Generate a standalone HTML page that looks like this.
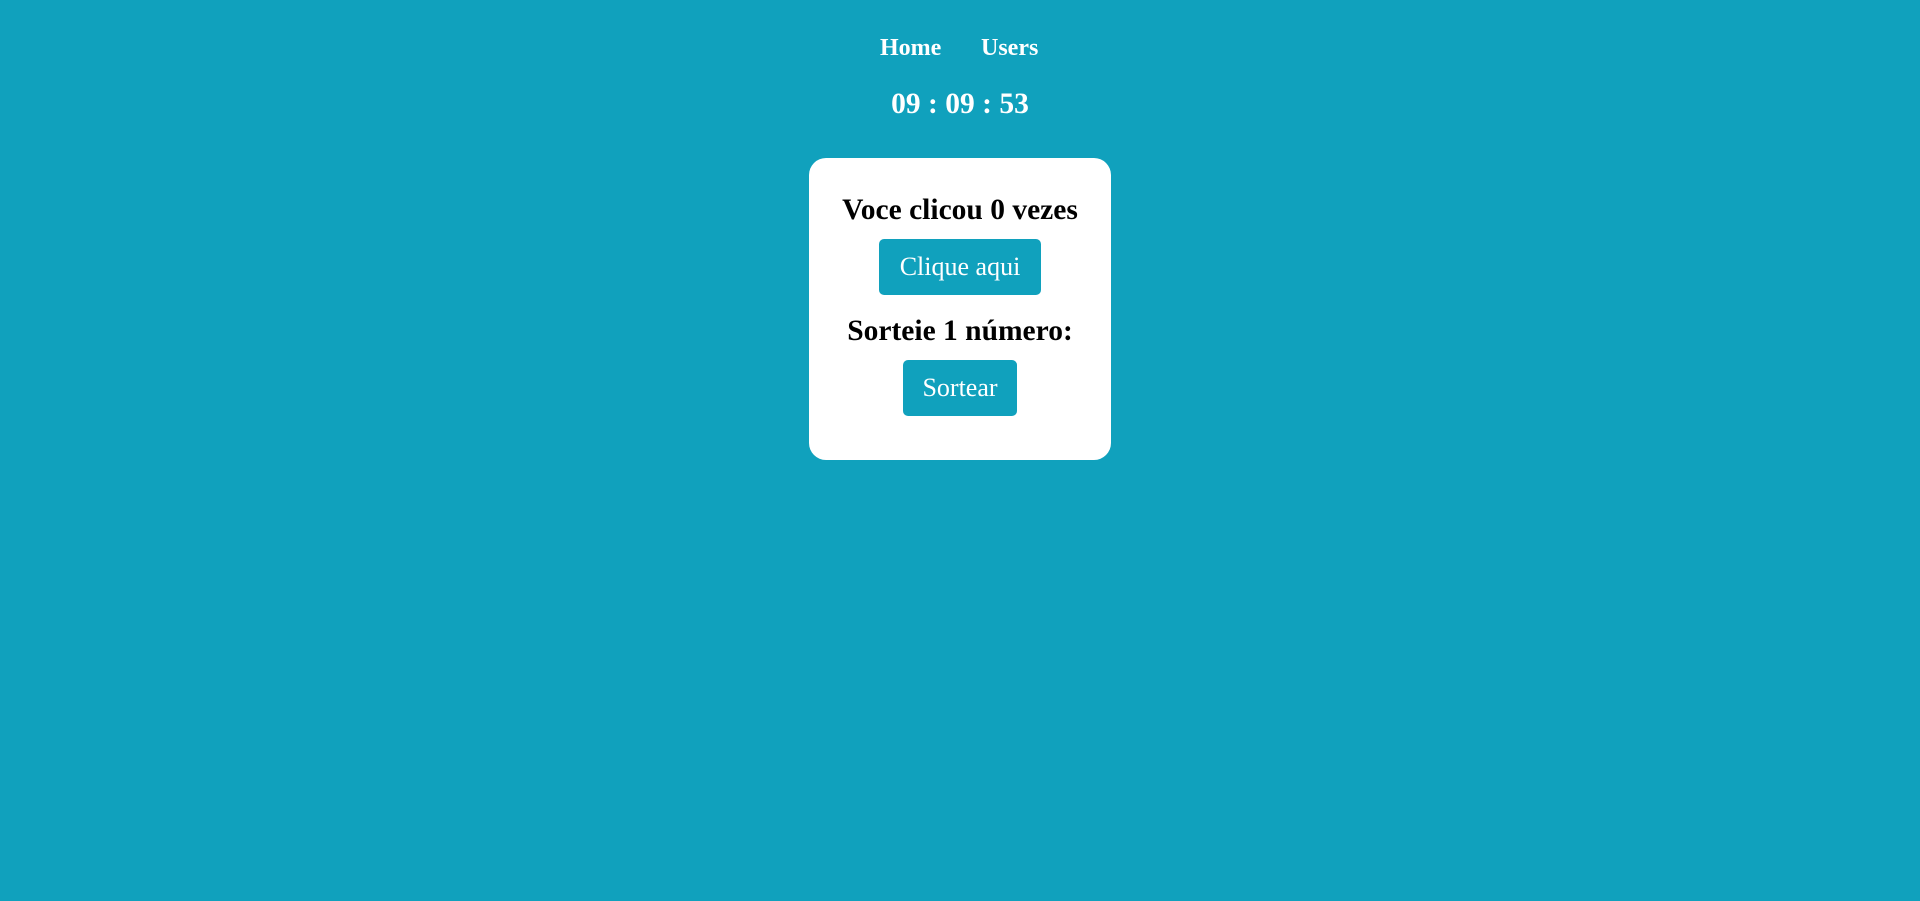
<!DOCTYPE html>
<html><head><meta charset="utf-8"><style>
html,body{margin:0;padding:0;width:1920px;height:901px;background:#10a1bd;font-family:"Liberation Serif",serif;overflow:hidden}
.a{position:absolute;white-space:nowrap}
.nav{font-weight:bold;color:#fff;font-size:24px;top:35px}
.clock{font-weight:bold;color:#fff;font-size:29.5px;left:0;width:1920px;text-align:center;top:88px}
.card{position:absolute;left:809px;top:158px;width:302px;height:302px;background:#fff;border-radius:17px}
.h{font-weight:bold;color:#000;font-size:29.5px;left:809px;width:302px;text-align:center}
.btn{position:absolute;background:#10a1bd;color:#fff;border-radius:5px;font-size:26px;text-align:center;line-height:56px;height:56px}
</style></head><body>
<div class="a nav" style="left:880px">Home</div>
<div class="a nav" style="left:981px">Users</div>
<div class="a clock">09 : 09 : 53</div>
<div class="card"></div>
<div class="a h" style="top:194px">Voce clicou 0 vezes</div>
<div class="btn" style="left:879px;top:239px;width:162px">Clique aqui</div>
<div class="a h" style="top:315px">Sorteie 1 número:</div>
<div class="btn" style="left:903px;top:360px;width:114px">Sortear</div>
</body></html>
